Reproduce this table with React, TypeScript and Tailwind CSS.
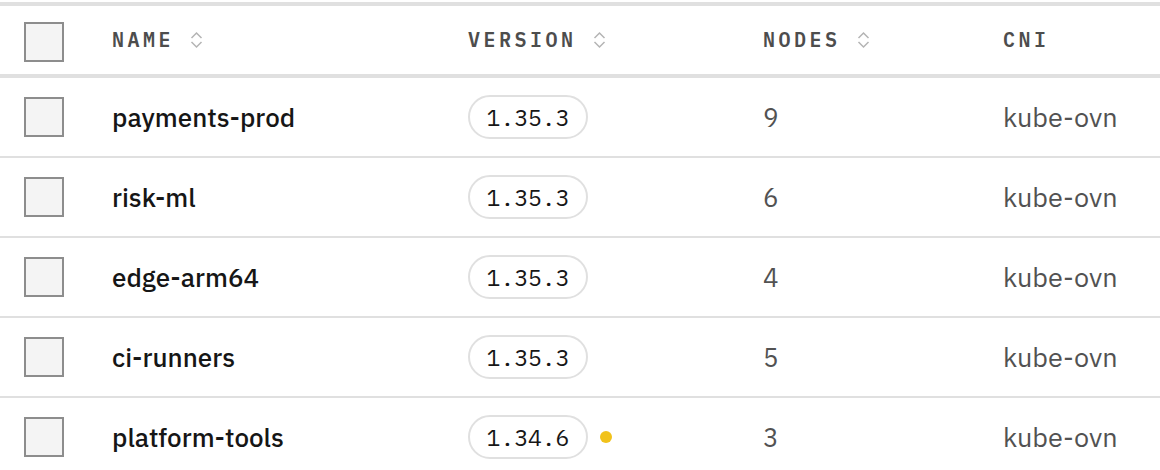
type Cluster = {
  name: string;
  version: string;
  nodes: number;
  cni: string;
  outdated?: boolean;
};

const clusters: Cluster[] = [
  { name: 'payments-prod', version: '1.35.3', nodes: 9, cni: 'kube-ovn' },
  { name: 'risk-ml', version: '1.35.3', nodes: 6, cni: 'kube-ovn' },
  { name: 'edge-arm64', version: '1.35.3', nodes: 4, cni: 'kube-ovn' },
  { name: 'ci-runners', version: '1.35.3', nodes: 5, cni: 'kube-ovn' },
  { name: 'platform-tools', version: '1.34.6', nodes: 3, cni: 'kube-ovn', outdated: true },
];

const grid = 'grid grid-cols-[112px_356px_295px_240px_1fr] items-center';
const mono = "font-['IBM_Plex_Mono','Liberation_Mono',monospace]";
const sans = "font-['IBM_Plex_Sans',Inter,sans-serif]";

function Checkbox() {
  return (
    <div className="ml-6 h-10 w-10 border-2 border-[#8d8d8d] bg-[#f4f4f4]" />
  );
}

function SortIcon() {
  return (
    <svg
      width="13"
      height="18"
      viewBox="0 0 13 18"
      fill="none"
      stroke="#b4b4b4"
      strokeWidth="1.5"
      className="ml-[16px]"
    >
      <path d="M1.5 7 L6.5 2 L11.5 7" />
      <path d="M1.5 11 L6.5 16 L11.5 11" />
    </svg>
  );
}

function HeaderCell({ label, sortable }: { label: string; sortable?: boolean }) {
  return (
    <div className="flex items-center">
      <span
        className={`${mono} text-[20px] font-semibold tracking-[3.5px] text-[#4d4d4d]`}
      >
        {label}
      </span>
      {sortable && <SortIcon />}
    </div>
  );
}

export default function App() {
  return (
    <div className="w-[1160px] bg-white pt-[2px]">
      <div className="border-t-4 border-[#e0e0e0]">
        <div className={`${grid} h-[72px] border-b-4 border-[#e0e0e0]`}>
          <div className="mt-1">
            <Checkbox />
          </div>
          <HeaderCell label="NAME" sortable />
          <HeaderCell label="VERSION" sortable />
          <HeaderCell label="NODES" sortable />
          <HeaderCell label="CNI" />
        </div>

        {clusters.map((c) => (
          <div
            key={c.name}
            className={`${grid} h-[80px] border-b-2 border-[#e0e0e0]`}
          >
            <Checkbox />
            <span className={`${sans} text-[26px] font-medium text-[#161616]`}>
              {c.name}
            </span>
            <div className="flex items-center">
              <span
                className={`${mono} flex h-[44px] w-[120px] items-center justify-center rounded-full border-2 border-[#e0e0e0] text-[23px] text-[#161616]`}
              >
                {c.version}
              </span>
              {c.outdated && (
                <span className="ml-3 h-3 w-3 rounded-full bg-[#f1c21b]" />
              )}
            </div>
            <span className={`${sans} text-[26px] text-[#525252]`}>
              {c.nodes}
            </span>
            <span className={`${sans} text-[27px] text-[#525252]`}>
              {c.cni}
            </span>
          </div>
        ))}
      </div>
    </div>
  );
}
